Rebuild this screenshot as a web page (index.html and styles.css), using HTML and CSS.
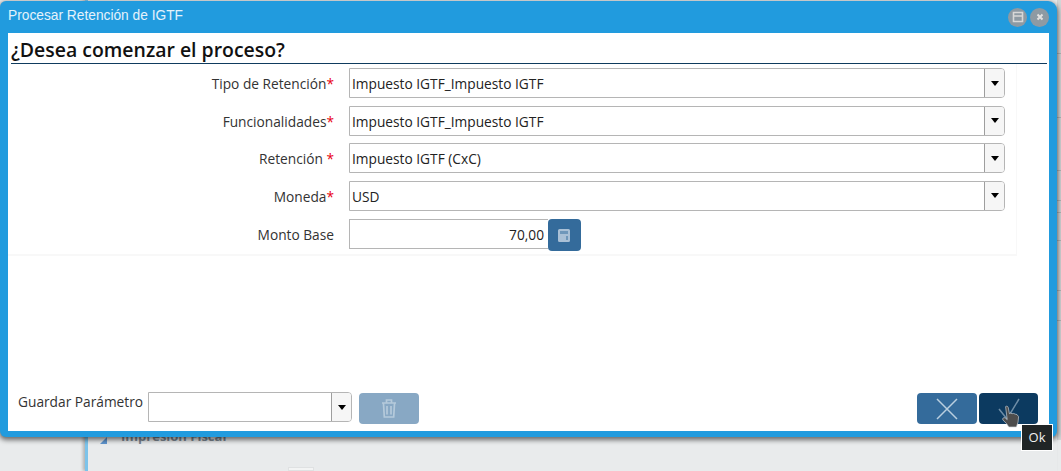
FILE: index.html
```html
<!DOCTYPE html>
<html lang="es">
<head>
<meta charset="utf-8">
<title>Procesar Retención de IGTF</title>
<link rel="stylesheet" href="styles.css">
</head>
<body>
<div class="backdrop">
  <div class="bg-panel">
    <span class="bg-label"><i class="bg-tri"></i>Impresión Fiscal</span>
    <span class="bg-box"></span>
  </div>
  <div class="bg-strip"></div>
</div>
<section class="window">
  <header class="titlebar">
    <span class="title">Procesar Retención de IGTF</span>
    <span class="win-btns">
      <span class="win-btn"><svg width="14" height="14" viewBox="0 0 14 14"><path d="M2.500 2.500h9v9h-9zM2.500 6h9" fill="none" stroke="#d8d8d8" stroke-width="1.600"/></svg></span>
      <span class="win-btn"><svg width="14" height="14" viewBox="0 0 14 14"><path d="M4.500 4.500l5 5M9.500 4.500l-5 5" fill="none" stroke="#e2e2e2" stroke-width="2"/></svg></span>
    </span>
  </header>
  <div class="content">
    <h1 class="heading">¿Desea comenzar el proceso?</h1>
    <div class="form">
      <div class="row">
        <label class="label">Tipo de Retención<b class="req">*</b></label>
        <div class="combo"><span class="combo-text">Impuesto IGTF_Impuesto IGTF</span><span class="combo-btn"><i class="caret"></i></span></div>
      </div>
      <div class="row">
        <label class="label">Funcionalidades<b class="req">*</b></label>
        <div class="combo"><span class="combo-text">Impuesto IGTF_Impuesto IGTF</span><span class="combo-btn"><i class="caret"></i></span></div>
      </div>
      <div class="row">
        <label class="label">Retención <b class="req">*</b></label>
        <div class="combo"><span class="combo-text">Impuesto IGTF (CxC)</span><span class="combo-btn"><i class="caret"></i></span></div>
      </div>
      <div class="row">
        <label class="label">Moneda<b class="req">*</b></label>
        <div class="combo"><span class="combo-text">USD</span><span class="combo-btn"><i class="caret"></i></span></div>
      </div>
      <div class="row row-amount">
        <label class="label">Monto Base</label>
        <div class="amount">70,00</div>
        <span class="calc"><svg width="12" height="13" viewBox="0 0 12 13"><path fill="#a9c0d6" d="M0 1.500A1.500 1.500 0 0 1 1.500 0h9A1.500 1.500 0 0 1 12 1.500v10a1.500 1.500 0 0 1-1.500 1.500h-9A1.500 1.500 0 0 1 0 11.500z"/><path fill="#6f97ba" d="M2 2h8v3H2zM8 7h2v4H8z"/></svg></span>
      </div>
    </div>
    <footer class="footer">
      <span class="save-label">Guardar Parámetro</span>
      <div class="combo combo-save"><span class="combo-text"></span><span class="combo-btn"><i class="caret"></i></span></div>
      <span class="btn btn-trash"><svg width="18" height="21" viewBox="0 0 18 21"><path d="M2 5h14M6.500 4.500V2h5v2.500M3.500 5.500l.8 13.500h9.400l.8-13.500M7 8v8.500M11 8v8.500" fill="none" stroke="#b5cadb" stroke-width="1.700"/></svg></span>
      <span class="spacer"></span>
      <span class="btn btn-cancel"><svg width="22" height="22" viewBox="0 0 22 22"><path d="M1 1l20 20M21 1L1 21" stroke="#b9cfdf" stroke-width="1.500" fill="none"/></svg></span>
      <span class="btn btn-ok"><svg width="22" height="22" viewBox="0 0 22 22"><path d="M1 11l8 10L21 1" stroke="#6f8da6" stroke-width="1.500" fill="none"/></svg></span>
    </footer>
  </div>
</section>
<svg class="cursor" width="20" height="26" viewBox="0 0 18 24"><path d="M4 1.500c1-.8 2.300-.3 2.500 1L7.500 8l1-.5 1.500.5 1.500-.2 1.500.7 1.500.3 1.500 2-.5 5-1.500 4.500H7l-2-3-3.500-3.500c-.8-1.500.7-2.500 2-2L5.500 13.500z" fill="#4d4d4d" stroke="#cfd6dc" stroke-width=".6"/></svg>
<div class="tooltip">Ok</div>
</body>
</html>
```

FILE: styles.css
```css
* { box-sizing: border-box; }
html, body { margin: 0; height: 100%; }
body {
  position: relative;
  width: 1061px;
  height: 471px;
  overflow: hidden;
  background: #e9ebec;
  font-family: "Open Sans", "Noto Sans", sans-serif;
  color: #333;
}
.backdrop {
  height: 471px;
  display: flex;
  padding-left: 85px;
  background: #e9ebec;
}
.bg-panel {
  flex: 1;
  position: relative;
  padding: 428px 0 0 12px;
  border-left: 3px solid #7cc3ea;
  box-shadow: -2px 0 3px rgba(0, 0, 0, .25);
}
.bg-box {
  position: absolute;
  left: 200px;
  top: 467px;
  width: 26px;
  height: 4px;
  background: #f3f4f4;
  border: 1px solid #dfe1e2;
}
.bg-strip {
  flex: none;
  width: 4px;
  height: 440px;
  background-color: #d4d6d7;
  background-image:
    linear-gradient(#b4b6b7, #b4b6b7), linear-gradient(#b4b6b7, #b4b6b7),
    linear-gradient(#b4b6b7, #b4b6b7), linear-gradient(#b4b6b7, #b4b6b7),
    linear-gradient(#b4b6b7, #b4b6b7), linear-gradient(#b4b6b7, #b4b6b7),
    linear-gradient(#b4b6b7, #b4b6b7), linear-gradient(#b4b6b7, #b4b6b7);
  background-size: 100% 1px;
  background-repeat: no-repeat;
  background-position: 0 53px, 0 117px, 0 170px, 0 200px, 0 212px, 0 240px, 0 290px, 0 320px;
}
.bg-label {
  display: flex;
  align-items: center;
  gap: 14px;
  font-size: 13px;
  font-weight: 700;
  color: #7d8892;
  line-height: 16px;
}
.bg-tri {
  width: 0;
  height: 0;
  border-left: 7px solid transparent;
  border-bottom: 7px solid #5f95cf;
  margin-top: 8px;
}
.window {
  position: absolute;
  left: 0;
  top: 1px;
  width: 1057px;
  height: 436px;
  display: flex;
  flex-direction: column;
  padding: 0 8px 6px 8px;
  background: #219bde;
  border-radius: 6px 9px 6px 6px;
  box-shadow: 0 2px 5px 1px rgba(0, 0, 0, .55);
}
.titlebar {
  flex: none;
  height: 32px;
  display: flex;
  align-items: center;
  justify-content: space-between;
  padding-bottom: 4px;
}
.title {
  font-family: "Liberation Sans", Arial, sans-serif;
  font-size: 13.750px;
  color: #e4f2fb;
}
.win-btns { display: flex; gap: 3px; margin-top: 4px; }
.win-btn {
  width: 19px;
  height: 19px;
  border-radius: 50%;
  background: #8e9aa3;
  display: flex;
  align-items: center;
  justify-content: center;
}
.content {
  flex: 1;
  display: flex;
  flex-direction: column;
  background: #fff;
  padding: 0 2px 0 3px;
}
.heading {
  margin: 0;
  height: 31px;
  font-size: 19.450px;
  line-height: 34px;
  font-weight: 600;
  color: #111;
  border-bottom: 1px solid #0f3b5e;
}
.form {
  width: 1009px;
  height: 192px;
  margin-left: -3px;
  padding: 4px 11px 0 0;
  display: flex;
  flex-direction: column;
  gap: 7.500px;
  border-right: 1px solid #f8f8f8;
  border-bottom: 2px solid #f8f8f8;
}
.row { display: flex; align-items: center; height: 30px; }
.row-amount { align-items: flex-start; margin-top: 1px; }
.label {
  flex: none;
  width: 326px;
  margin: 2px 15px 0 0;
  text-align: right;
  font-size: 13.720px;
  line-height: 30px;
  color: #333;
}
.row-amount .label { margin-top: 1px; }
.req { color: #e8000f; font-weight: 400; }
.combo {
  display: flex;
  flex: 1;
  height: 30px;
  border: 1px solid #b5b5b5;
  border-radius: 0 4px 4px 0;
  background: #fff;
}
.combo-text {
  flex: 1;
  padding-left: 2px;
  font-size: 13.720px;
  line-height: 29px;
  color: #222;
}
.combo-btn {
  flex: none;
  width: 20px;
  display: flex;
  align-items: center;
  justify-content: center;
  background: #f6f6f6;
  border-left: 1px solid #9e9e9e;
  border-radius: 0 3px 3px 0;
}
.caret {
  width: 0;
  height: 0;
  border-left: 4.500px solid transparent;
  border-right: 4.500px solid transparent;
  border-top: 5px solid #000;
}
.amount {
  flex: none;
  width: 199px;
  height: 30px;
  border: 1px solid #b5b5b5;
  border-right: 0;
  text-align: right;
  font-size: 13.720px;
  line-height: 30px;
  padding-right: 4px;
  color: #222;
}
.calc {
  flex: none;
  width: 33px;
  height: 32px;
  padding-right: 2px;
  border-radius: 4px;
  background: #346b9b;
  display: flex;
  align-items: center;
  justify-content: center;
}
.footer {
  flex: none;
  margin-top: auto;
  height: 39px;
  display: flex;
  align-items: flex-start;
  padding: 0 9px 0 7px;
}
.save-label {
  width: 130px;
  font-size: 13.720px;
  line-height: 19px;
  color: #333;
}
.combo-save {
  flex: none;
  width: 204px;
  height: 30px;
}
.btn {
  flex: none;
  width: 60px;
  height: 31px;
  margin-top: 1px;
  border-radius: 4px;
  display: flex;
  align-items: center;
  justify-content: center;
}
.btn-trash { background: #88a8c4; margin-left: 7px; }
.spacer { flex: 1; }
.btn-cancel { background: #346b9b; margin-right: 2px; }
.btn-ok { background: #0c3a60; width: 59px; }
.cursor { position: absolute; left: 1001px; top: 405px; }
.tooltip {
  position: absolute;
  left: 1021px;
  top: 424px;
  width: 32px;
  height: 27px;
  background: #202526;
  border: 1px solid #fff;
  color: #f0f0f0;
  font-size: 13px;
  line-height: 25px;
  text-align: center;
}
```
